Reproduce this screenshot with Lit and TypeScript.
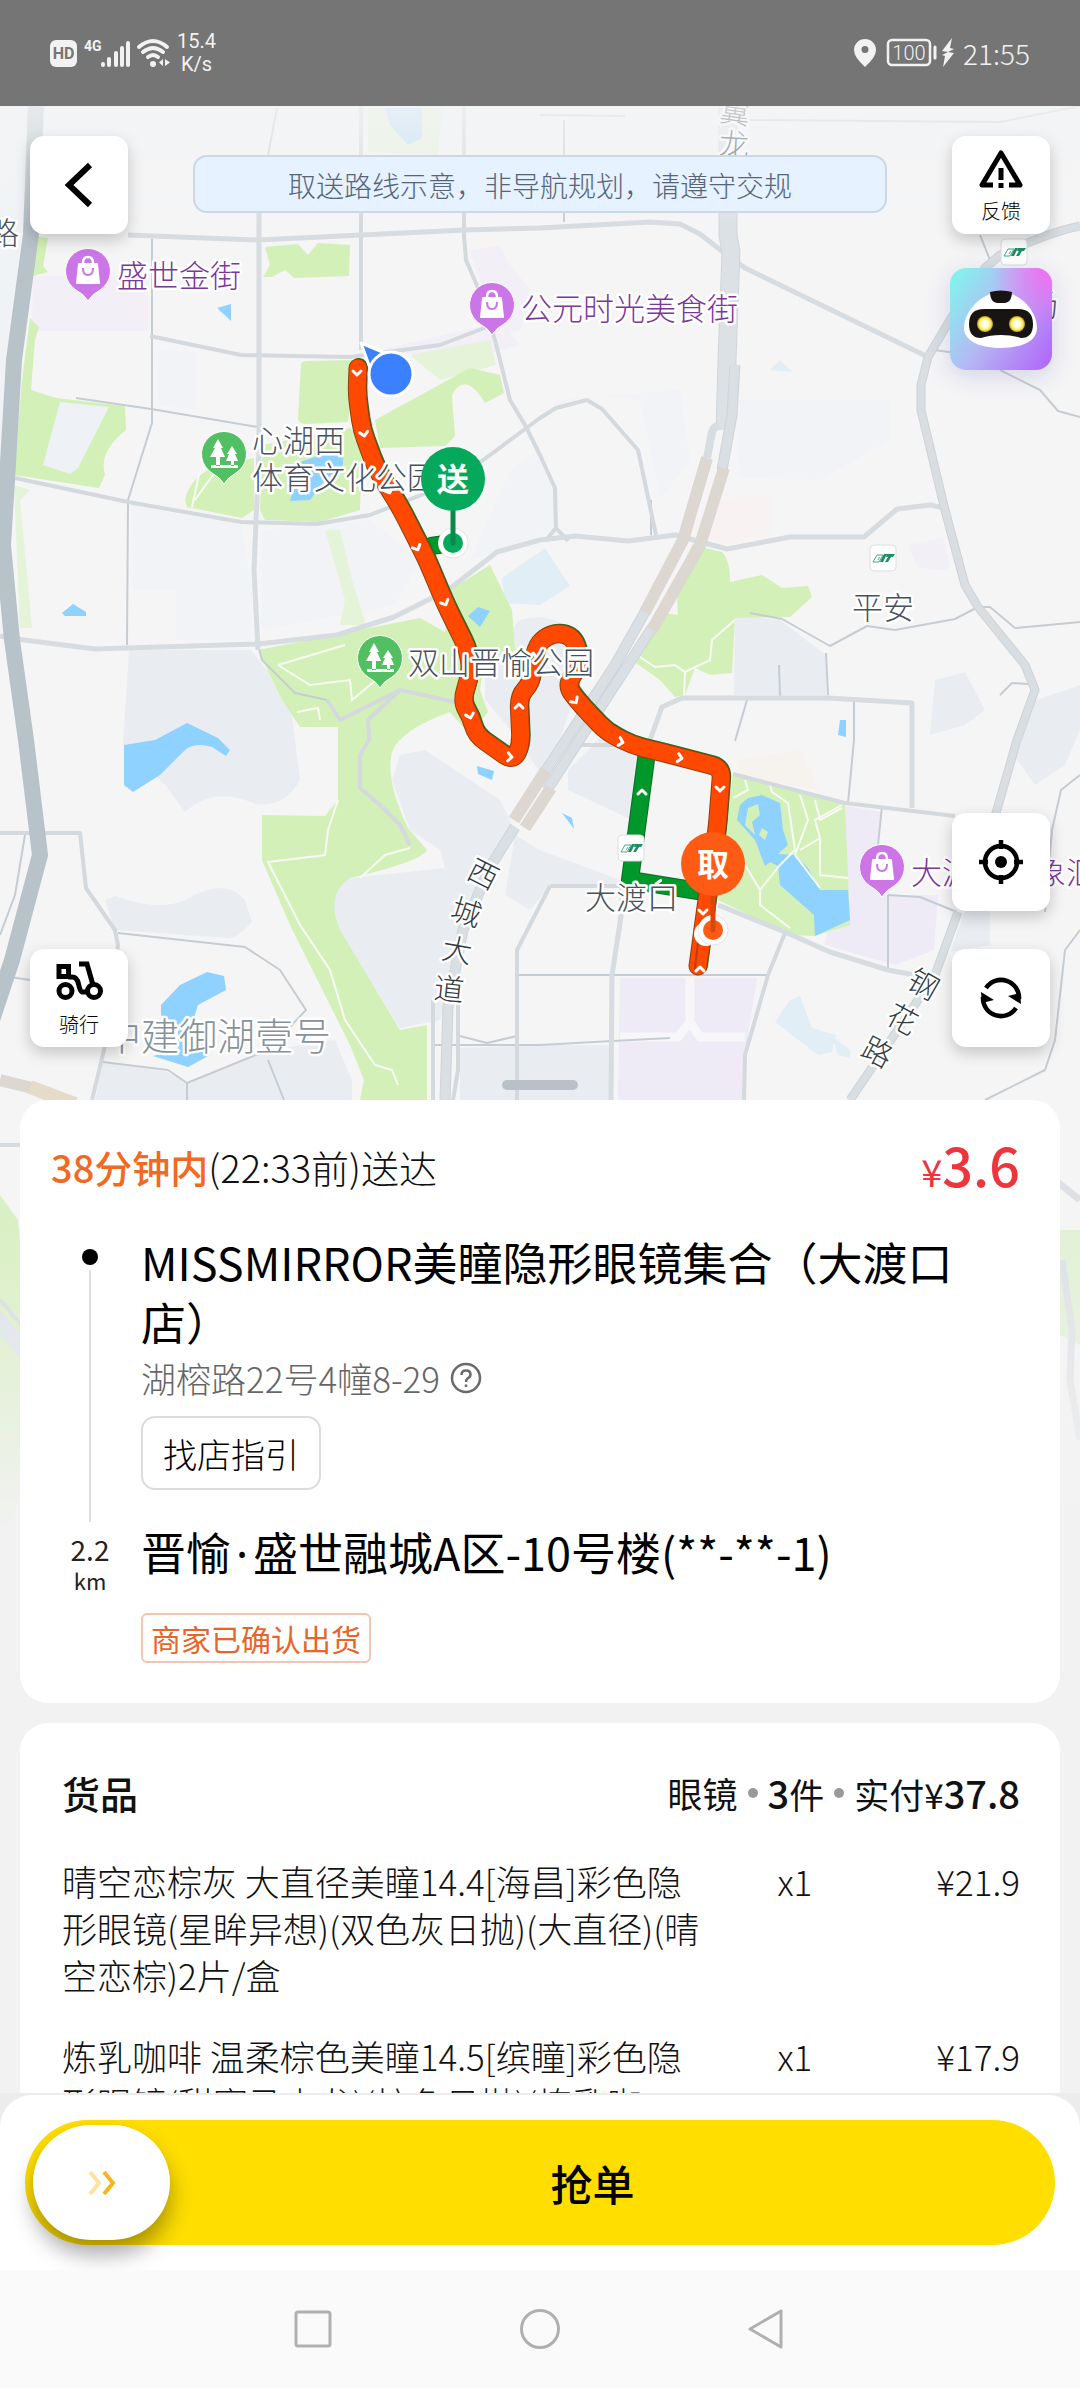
import { LitElement, html, svg, css } from "lit";
import { customElement, property } from "lit/decorators.js";

type Pt = [number, number];

interface Goods {
  name: string;
  count: string;
  price: string;
}

const GOODS: Goods[] = [
  {
    name: "晴空恋棕灰 大直径美瞳14.4[海昌]彩色隐形眼镜(星眸异想)(双色灰日抛)(大直径)(晴空恋棕)2片/盒",
    count: "x1",
    price: "¥21.9",
  },
  {
    name: "炼乳咖啡 温柔棕色美瞳14.5[缤瞳]彩色隐形眼镜(甜蜜马卡龙)(棕色日抛)(炼乳咖",
    count: "x1",
    price: "¥17.9",
  },
];

/* ---- map geometry, in map units ---- */

const BLOCKS = [
  "M129 650H251L290 700 300 780Q285 808 255 804 215 785 185 812L165 785 123 745z",
  "M105 900 115 896Q160 912 185 900 225 876 245 900L252 922Q235 940 228 938L115 930z",
  "M400 755 425 750 500 800 515 830 470 920 440 1020 400 1028 338 930Q325 890 350 878L445 868 440 850 410 830 392 780z",
  "M103 1062 168 1072 187 1083 268 1050 335 1040 352 1080V1100H95z",
  "M156 350 196 352V410L158 405z",
  "M132 505 241 525 252 590 252 640H176V590H133z",
  "M262 530 370 520 420 560 395 605 262 630z",
  "M510 470 540 450 555 490V530L470 560z",
  "M735 615 780 620 826 655V695H734z",
  "M735 400 890 400V440L820 480 740 478z",
  "M485 655 520 620Q560 608 592 650L545 780 515 735 485 700z",
  "M568 770 600 738 655 745 632 820 568 790z",
  "M515 835 540 850 620 880 620 886H550L530 910 505 895z",
  "M540 1045H612V1100H460V1048z",
  "M1010 750 1035 700 1080 685V730L1065 765 1035 785z",
  "M930 735 935 680 965 672 985 710 965 725z",
  "M965 910H990V945L950 952z",
  "M555 400 680 390 690 460 660 500 640 400 590 395 560 410z",
];

const PURPLES = [
  "M33 276H148V331H32z",
  "M470 250 500 246 508 262 530 290 520 330 500 335 480 280z",
  "M908 545 943 538 950 565 945 570 918 568z",
  "M380 350 500 322 520 345 470 360z",
];

const MALL_AREAS = [
  "M846 806 882 812 878 845 890 895H938L934 950 895 965 825 945z",
  "M620 978H757L748 1035 744 1100H618z",
];

const PALE_WATER = [
  "M502 578 545 548 570 586 540 605 505 603z",
  "M790 1000 800 996 812 1028 836 1035 832 1052 818 1055 775 1022z",
  "M832 1036 850 1050V1058L838 1055z",
  "M770 370 780 360 792 372z",
];

const TOP_WATER = "M385 108H422V138L408 145 390 125z";

const GREENS = [
  "M36 236 48 238 43 266 48 272 33 276z",
  "M30 318 39 327 35 340 31 390 56 398 125 406 126 430Q98 452 105 475L99 488 14 475 22 380z",
  "M265 247 298 244 308 255 318 243 350 245 349 276 294 278 285 270 272 277 263 277 270 265z",
  "M301 364Q302 361 308 361L356 360 348 422 305 424Q298 423 298 418z",
  "M375 420 470 368 500 375 504 393 485 403Q465 370 452 395L455 436 445 446 380 448z",
  "M262 445 350 428 362 440 360 510 320 522 265 520 260 510z",
  "M185 500Q190 475 220 465L254 458V510L242 518 187 507z",
  "M692 545 722 552Q730 560 730 582L762 575 782 588 808 586 812 597 790 617 735 618 732 673 710 675 695 668 685 695 675 697 660 680 636 663 655 612 678 615 676 580z",
  "M733 774 845 805 850 925 815 936 790 935 718 900 724 830z",
  "M258 650 420 618 445 632 450 590 490 565 512 610 515 652 485 655 480 690 488 712 470 735 450 712Q400 730 392 752 385 780 408 828L427 850Q420 862 350 878 325 895 340 930L400 1030 427 1025V1100H360L364 1080 350 1045 290 925 262 860V815L325 816 338 800V727H300L282 700z",
];

const PALE_GREENS = [
  "M325 530 340 530 352 580 366 625H340L345 600z",
  "M14 485 30 490 20 500 32 628H20z",
  "M368 108H442L438 155 368 152z",
  "M410 355 490 340 496 365 440 380z",
];

const LAKES = [
  "M124 745 155 740 187 723 218 738 230 750 226 756 212 747Q195 742 185 750L160 775 133 792 124 785z",
  "M207 972 224 976 226 990 198 1005 190 1030 210 1055 188 1067 153 1056 178 1050V1030L161 1015V1005L180 985z",
  "M292 465 320 455 343 448V465L325 480 310 500 290 501 296 480z",
  "M217 308 231 304V321z",
  "M62 613 73 604 86 612V616H65z",
  "M468 616 478 607 490 611 480 627z",
  "M477 766 494 771 492 780 478 774z",
  "M840 720H846V737L838 735z",
  "M562 813 572 818 574 829z",
  "M762 795 780 803 783 830 788 845 778 854 795 855 808 868 820 890H848L850 920 815 936 814 915 780 885 778 866 770 862 765 866 755 840 737 820 740 805 748 798z",
];

const THIN_ROADS = [
  "M152 239V423L128 500 127 645",
  "M76 398 151 409 258 427",
  "M978 607 990 607 1015 628 1080 622",
  "M978 607 955 619 895 630 867 626 830 646 782 619 750 613",
  "M826 653 828 695M747 700 735 741M779 665 780 696M854 701V740L848 803",
  "M882 806 878 845 888 870M888 895V968M888 895 920 897 957 912",
  "M515 975H770M540 1045 612 1041 670 1038",
  "M433 1045H540M460 1036 487 1043 517 1036",
  "M25 835 15 895 0 935M118 933 245 947 280 970 306 1010 268 1050 187 1083 168 1070 103 1062",
  "M187 1083V1100M268 1060 284 1100M10 977 30 980",
  "M1080 775 1061 790 1052 830 1045 912M1080 930 1065 950 1055 1040 1045 1070 985 1100",
  "M564 120V222M277 108 268 155M980 235 990 260M1000 370 1040 390 1058 411 1080 417M935 350 955 353",
  "M1000 695 1012 683 1028 684M651 535V500",
  "M540 115 625 116M750 120 1000 122 1080 106",
  "M258 645 262 660 295 693 327 700",
];

const MID_ROADS = [
  "M150 336 241 355 350 357 440 345 500 322",
  "M15 478 128 502 241 522 317 524 370 515 452 483 540 418 556 408 587 400 602 409 638 450 656 535",
  "M361 106V350M464 106V235L466 260 478 288 495 340 510 400 525 425 540 455 555 488 556 530M545 541 556 528 568 541",
  "M785 933 768 975 745 1055 744 1100",
  "M550 886H620M550 886 517 950V1100",
  "M0 833H80L86 888 115 930 118 945 104 1050 92 1100",
  "M327 700 340 720 400 690 455 702M400 690 368 720 369 740 360 755V788L380 805 400 825 410 845",
  "M733 774 845 803 955 816",
  "M433 1000V1100M458 1000V1070L453 1100M570 760 580 745 650 745",
];

const MAIN_ROADS = [
  "M128 235 258 240 465 230 540 228 650 222 680 224 700 234 723 252 745 268 928 357",
  "M259 211V450L254 570 258 650",
  "M0 636 24 640 95 649 258 644 337 635 394 617 448 590 497 552 540 540 575 536 628 541 675 535 727 549 790 537H864L897 509 930 505 944 508",
  "M650 740 662 707 682 698H828L912 703V808",
  "M718 905 785 932 830 952 888 970 915 975",
  "M622 886V910L612 975 611 1100",
];

const EAST_ROAD =
  "M1080 226Q1050 232 1000 255L985 268 950 320 928 357 921 385V410L945 510 965 585 978 607 1025 665 1035 690 1017 740 994 820M958 912 935 975 850 1100";

const RIVER_ROAD = "M36 106 31 234 14 360 7 480 3 545 12 640 26 740 40 855 12 960-8 1020";

const TRUNK = "M728 106V235L731 252 727 360 725 430";

const TRUNK_LEGS =
  "M735 365 732 415 722 470M646 610 615 665 543 775M652 628 547 790M515 827 490 867 463 930 448 1007 445 1100";

const TUNNELS =
  "M707 458 683 540 645 612M724 468 700 545 652 630M546 770 514 820M551 788 525 828M0 1080 32 1088";

const FOOTPATHS =
  "M745 780 748 790 733 798M770 785 772 792 788 803 795 850 780 865 760 890V905L790 928M800 795 808 820 795 855M815 800 820 820 842 808M800 850 820 838 815 820 842 805M820 838V875L848 878M795 855 820 888M760 890 745 865 725 850M637 655 655 667 675 665 685 672 710 660 712 640 735 620M685 672 684 697M338 800 328 830 325 855 268 862 300 925 330 970 345 1020 375 1065 392 1070 398 1085M410 848 385 855 360 878M278 665 345 645M278 665 310 685 350 680 352 700 400 660M200 470 192 507M220 465 195 500M297 712 318 708 320 720";

/* the waypoints of the ride that is under way */
const RIDE: Pt[] = [
  [358, 368], [357, 395], [362, 430], [376, 468], [400, 507], [427, 560],
  [445, 603], [468, 650], [471, 670], [462, 702], [471, 717], [476, 735],
  [513, 761], [521, 745], [519, 696], [531, 683], [533, 663], [537, 645],
  [547, 636], [559, 633], [570, 636], [577, 645], [580, 664], [566, 686],
  [583, 707], [607, 732], [632, 745], [672, 755], [722, 768], [717, 830],
  [707, 900], [698, 966],
];
const DELIVERY_LEG = "M647 752 630 880 698 891M431 546 452 543";

/** Joins the points with lines and rounds every bend by up to r units. */
function rounded(points: Pt[], r: number): string {
  let d = `M${points[0].join(" ")}`;
  for (let i = 1; i < points.length - 1; i++) {
    const [x, y] = points[i];
    const toward = (p: Pt): string => {
      const len = Math.hypot(p[0] - x, p[1] - y);
      const k = Math.min(r, len / 2) / len;
      return `${(x + (p[0] - x) * k).toFixed(1)} ${(y + (p[1] - y) * k).toFixed(1)}`;
    };
    d += `L${toward(points[i - 1])}Q${x} ${y} ${toward(points[i + 1])}`;
  }
  return d + `L${points[points.length - 1].join(" ")}`;
}

/* x, y, heading in degrees (0 = up) */
const CHEVRONS: [number, number, number][] = [
  [357, 373, 180], [364, 434, 170], [389, 491, 155], [417, 548, 155],
  [445, 603, 155], [470, 716, 165], [510, 757, 95], [519, 706, 0],
  [533, 655, 10], [575, 701, 145], [621, 742, 105], [680, 758, 100],
  [720, 789, 180], [703, 912, 180], [700, 969, 0], [642, 792, 0],
  [658, 884, 280],
];

interface Label {
  x: number;
  y: number;
  text: string;
  kind: string;
}
const LABELS: Label[] = [
  { x: 117, y: 287, text: "盛世金街", kind: "mall" },
  { x: 521, y: 320, text: "公元时光美食街", kind: "mall" },
  { x: 911, y: 884, text: "大渡口万象汇", kind: "mall" },
  { x: 252, y: 452, text: "心湖西", kind: "place" },
  { x: 252, y: 489, text: "体育文化公园", kind: "place" },
  { x: 408, y: 674, text: "双山晋愉公园", kind: "place" },
  { x: 852, y: 619, text: "平安", kind: "place" },
  { x: 585, y: 909, text: "大渡口", kind: "place" },
  { x: -12, y: 244, text: "路", kind: "place" },
  { x: 1027, y: 316, text: "场", kind: "place" },
  { x: 103, y: 1050, text: "中建御湖壹号", kind: "estate" },
];

/* x, y, rotation, character, kind */
const ROAD_NAMES: [number, number, number, string, string][] = [
  [483, 875, 27, "西", "road"], [466, 913, 18, "城", "road"],
  [457, 951, 10, "大", "road"], [449, 990, 6, "道", "road"],
  [923, 985, 30, "钢", "road"], [902, 1020, 28, "花", "road"],
  [877, 1053, 28, "路", "road"], [735, 113, 8, "翼", "road"],
  [734, 145, 3, "龙", "road"],
];

const join = (list: string[]) => list.join("");

@customElement("delivery-map")
export class DeliveryMap extends LitElement {
  static styles = css`
    :host { display: block; }
    svg { display: block; width: 100%; height: auto; }
    text { font-family: "Noto Sans CJK SC", "Noto Sans", sans-serif; font-weight: 300; }
    .label { paint-order: stroke; stroke: #fff; stroke-width: 5px; stroke-linejoin: round; font-size: 31px; }
    .mall { fill: #7b3899; }
    .place { fill: #465260; }
    .estate { fill: #87929c; font-size: 38px; }
    .road { fill: #333c45; font-size: 30px; text-anchor: middle; }
    .stop { fill: #fff; font-size: 32px; font-weight: 700; text-anchor: middle; }
    .road-line { fill: none; stroke-linejoin: round; }
  `;

  private poi(x: number, y: number, kind: "mall" | "park") {
    const fill = kind === "mall" ? "#cb75e6" : "#53bf63";
    return svg`<g transform="translate(${x} ${y})">
      <path d="M0 30Q-3 24-12 19A22.500 22.500 0 1 1 12 19Q3 24 0 30z" fill=${fill} stroke="#fff" stroke-width="1"/>
      ${kind === "mall"
        ? svg`<path d="M-9-7H9L11 12H-11z" fill="#fff" stroke="#fff" stroke-width="2" stroke-linejoin="round"/>
            <path d="M-5-8Q-5-14 0-14T5-8" fill="none" stroke="#fff" stroke-width="2.500"/>
            <path d="M-5-3Q-5 4 0 4T5-3" fill="none" stroke=${fill} stroke-width="2"/>`
        : svg`<path d="M-6-15-11-6H-9L-14 3H-8V12H-4V3H1L-3-6H-1zM8-8 3 0H5L2 7H7V12H10V7H14L11 0H13zM-13 11H14V14H-13z" fill="#fff"/>`}
    </g>`;
  }

  private station(x: number, y: number) {
    return svg`<g transform="translate(${x} ${y})">
      <rect x="-13" y="-13" width="26" height="26" rx="4" fill="#fff" stroke="#d9dfe2" stroke-width="1"/>
      <path d="M-6-3H0L-4 4H-10z" fill="none" stroke="#3fae80" stroke-width="1"/>
      <path d="M-5 2-3-1M-2 3 1-2" stroke="#3fae80" stroke-width="1"/>
      <path d="M1-4H4L0 4H-3zM4-4H12L10-1H8L5 4H2L5-1H3z" fill="#1d8f62"/>
    </g>`;
  }

  private stop(x: number, y: number, fill: string, dark: string, base: number, name: string) {
    return svg`<g>
      <circle cx=${x} cy=${base} r="15" fill="#fff" stroke="#00000018" stroke-width="1"/>
      <circle cx=${x} cy=${base} r="10" fill=${fill}/>
      <path d="M${x} ${y + 20}V${base}" stroke=${dark} stroke-width="5" stroke-linecap="round"/>
      <circle cx=${x} cy=${y} r="32" fill=${fill}/>
      <text class="stop" x=${x} y=${y + 12}>${name}</text>
    </g>`;
  }

  render() {
    const ride = rounded(RIDE, 11);
    return html`<svg viewBox="0 106 1080 1464" role="img" aria-label="配送路线地图">
      <defs>
        <linearGradient id="sky" x1="0" y1="0" x2="0" y2="1">
          <stop offset="0" stop-color="#f3f4f5" stop-opacity=".8"/>
          <stop offset=".4" stop-color="#f3f4f5" stop-opacity=".55"/>
          <stop offset="1" stop-color="#f4f5f6" stop-opacity="0"/>
        </linearGradient>
        <linearGradient id="ground" x1="0" y1="0" x2="0" y2="1">
          <stop offset="0" stop-color="#f2f2f2" stop-opacity="0"/>
          <stop offset=".9" stop-color="#f2f2f2"/>
        </linearGradient>
      </defs>
      <rect y="106" width="1080" height="1464" fill="#f5f5f6"/>
      <path d="M0 106H30L10 400 0 560z" fill="#f0f3f6"/>
      <path d=${join(BLOCKS.slice(4, 8)) + BLOCKS[9] + BLOCKS[17]} fill="#f1f3f6"/>
      <path d=${join([...BLOCKS.slice(0, 4), BLOCKS[8], ...BLOCKS.slice(10, 17)])} fill="#e9edf2"/>
      <path d="M720 500 770 495V535L730 545 690 530z" fill="#f8f2f2"/>
      <path d="M738 760 800 750 820 790 736 775z" fill="#f6f2ee"/>
      <path d=${join(PURPLES)} fill="#f2eff7"/>
      <path d=${join(MALL_AREAS)} fill="#eeeaf6"/>
      <path d="M690 978V1022L700 1037H745M690 1022 678 1037H620" fill="none" stroke="#f7f6f8" stroke-width="9"/>
      <path d=${join(PALE_WATER)} fill="#e2eef5"/>
      <path d=${join(PALE_GREENS)} fill="#e5f3d9"/>
      <path d=${TOP_WATER} fill="#b8dcf8"/>
      <path d=${join(GREENS)} fill="#d3f0b8"/>
      <path d="M60 402 109 407 78 468 70 474 43 465z" fill="#eef1f5"/>
      <path d=${join(LAKES)} fill="#8fd1ff"/>
      <path d="M748 808 758 804 760 815 752 822 755 835 745 825zM762 828 768 832 765 840 759 835z" fill="#d3f0b8"/>
      <path d=${FOOTPATHS} fill="none" stroke="#f7fbf4" stroke-width="2"/>
      <path class="road-line" d=${join(THIN_ROADS)} stroke="#c6cdd2" stroke-width="2"/>
      <path class="road-line" d=${join(MID_ROADS)} stroke="#d3d9dc" stroke-width="4"/>
      <path class="road-line" d=${join(MAIN_ROADS)} stroke="#d6dce0" stroke-width="5"/>
      <path class="road-line" d=${EAST_ROAD} stroke="#ccd4d8" stroke-width="9"/>
      <path class="road-line" d=${EAST_ROAD} stroke="#d8dee1" stroke-width="7"/>
      <path class="road-line" d=${RIVER_ROAD} stroke="#b7c3c9" stroke-width="16"/>
      <path class="road-line" d=${TRUNK} stroke="#cfd6da" stroke-width="19"/>
      <path class="road-line" d=${TRUNK} stroke="#dce1e5" stroke-width="17"/>
      <path class="road-line" d=${TRUNK_LEGS} stroke="#cdd4da" stroke-width="11"/>
      <path class="road-line" d=${TRUNK_LEGS} stroke="#dadfe4" stroke-width="9"/>
      <path class="road-line" d="M707 458 712 432Q714 426 719 426" stroke="#d8dde1" stroke-width="8"/>
      <path class="road-line" d=${TUNNELS} stroke="#dcd7d0" stroke-width="12"/>
      <path class="road-line" d="M30 1087 75 1104" stroke="#e4dbc9" stroke-width="14"/>
      <path d="M0 1195 18 1220 30 1360 30 1480 0 1540z" fill="#daf0c4"/>
      <path class="road-line" d="M0 1300 30 1335M0 1145H30" stroke="#d5dbde" stroke-width="4"/>
      <path d="M0 1310 30 1345V1370L0 1335z" fill="#dde2e8"/>
      <path d="M1050 1230H1080V1345L1050 1330z" fill="#e2f1d6"/>
      <path class="road-line" d="M1055 1180 1080 1200M1062 1260 1072 1330 1070 1380 1080 1440" stroke="#dde1e5" stroke-width="7"/>
      <rect y="1230" width="1080" height="340" fill="url(#ground)"/>
      <g fill="none" stroke-linecap="round" stroke-linejoin="round">
        <path d=${DELIVERY_LEG} stroke="#0a6b22" stroke-width="18"/>
        <path d=${DELIVERY_LEG} stroke="#00972b" stroke-width="16"/>
        <path d=${ride} stroke="#0c7a2a" stroke-width="18" transform="translate(1 -1)"/>
        <path d=${ride} stroke="#91400a" stroke-width="19"/>
        <path d=${ride} stroke="#ff4800" stroke-width="17"/>
        <path d="M695 968 700 925" stroke="#b8400c" stroke-width="2"/>
        ${CHEVRONS.map(
          ([x, y, a]) => svg`<path d="M-4 2 0-2 4 2" stroke="#fff" stroke-width="3" transform="translate(${x} ${y}) rotate(${a})"/>`,
        )}
      </g>
      ${LABELS.map((l) => svg`<text class="label ${l.kind}" x=${l.x} y=${l.y}>${l.text}</text>`)}
      ${ROAD_NAMES.map(
        ([x, y, a, t, k]) => svg`<text class="label ${k}" y="10" transform="translate(${x} ${y}) rotate(${a})">${t}</text>`,
      )}
      ${this.poi(88, 271, "mall")} ${this.poi(492, 305, "mall")} ${this.poi(882, 867, "mall")}
      ${this.poi(224, 454, "park")} ${this.poi(380, 658, "park")}
      ${this.station(1014, 252)} ${this.station(883, 558)} ${this.station(631, 848)}
      <g fill="#3a80ff" stroke="#fff" stroke-width="3" stroke-linejoin="round">
        <path d="M361 343 385 353 370 368z"/>
        <circle cx="391" cy="374" r="22"/>
      </g>
      <circle cx="706" cy="934" r="12" fill="#fff"/>
      ${this.stop(713, 864, "#ff5b14", "#d9480a", 930, "取")}
      ${this.stop(453, 479, "#06a95b", "#078a4b", 543, "送")}
      <rect y="106" width="1080" height="120" fill="url(#sky)"/>
    </svg>`;
  }
}

@customElement("goods-card")
export class GoodsCard extends LitElement {
  @property({ attribute: false }) goods: Goods[] = [];

  static styles = css`
    :host { display: block; background: #fff; border-radius: 28px; padding: 40px 40px 40px 42px; color: #111; }
    .head { display: flex; justify-content: space-between; align-items: center; height: 60px; }
    h2 { margin: 0; font-size: 38px; font-weight: 500; line-height: 60px; }
    .sum { display: flex; align-items: center; gap: 10px; font-size: 35px; line-height: 48px; font-weight: 400; }
    .num { font-size: 38px; font-weight: 500; }
    .dot { width: 10px; height: 10px; border-radius: 50%; background: #999; }
    table { width: 100%; border-collapse: collapse; table-layout: fixed; font-size: 35px; line-height: 47px; font-weight: 300; }
    td { padding: 34px 0 0; vertical-align: top; text-align: left; }
    .name { width: 68%; }
    .count { width: 17%; text-align: center; }
    .price { text-align: right; }
  `;

  render() {
    return html`
      <div class="head">
        <h2>货品</h2>
        <div class="sum">
          <span>眼镜</span><i class="dot"></i>
          <span><b class="num">3</b>件</span><i class="dot"></i>
          <span>实付¥<b class="num">37.8</b></span>
        </div>
      </div>
      <table aria-label="货品">
        <tbody>
          ${this.goods.map(
            (g) => html`<tr>
              <td class="name">${g.name}</td>
              <td class="count">${g.count}</td>
              <td class="price">${g.price}</td>
            </tr>`,
          )}
        </tbody>
      </table>
    `;
  }
}

@customElement("status-bar")
export class StatusBar extends LitElement {
  static styles = css`
    :host {
      display: flex; justify-content: space-between; align-items: center;
      height: 106px; padding: 0 50px; box-sizing: border-box;
      background: #757575; color: #f2f2f2; font-family: Roboto, sans-serif;
    }
    .side { display: flex; align-items: center; gap: 8px; }
    .signal { gap: 6px; }
    .speed { font-size: 20px; line-height: 23px; text-align: center; }
    .time { font-size: 28px; font-weight: 300; line-height: 34px; font-family: "Noto Sans CJK SC", sans-serif; }
    svg { display: block; overflow: visible; }
    text { font-family: Roboto, sans-serif; fill: #f2f2f2; }
    .hd { fill: #757575; font-size: 16px; font-weight: 700; text-anchor: middle; }
    .gen { font-size: 14px; font-weight: 700; }
    .level { font-size: 20px; text-anchor: middle; font-weight: 300; }
  `;

  render() {
    return html`
      <div class="side signal">
        <svg width="27" height="28" viewBox="0 0 27 28">
          <rect width="27" height="27" y="1" rx="6" fill="#f2f2f2"/><text class="hd" x="13.500" y="20">HD</text>
        </svg>
        <svg width="48" height="30" viewBox="0 0 48 30">
          <text class="gen" x="1" y="13">4G</text>
          <path d="M20 27V26M26 27V21M33 27V15M39 27V10M45 27V5" stroke="#f2f2f2" stroke-width="4" stroke-linecap="round"/>
        </svg>
        <svg width="34" height="30" viewBox="0 0 34 30">
          <g fill="none" stroke="#f2f2f2" stroke-width="4" stroke-linecap="round">
            <path d="M2 9Q16-3 30 9M6 14Q16 6 26 14M11 19Q16 15 21 19"/>
          </g>
          <circle cx="16" cy="26" r="3" fill="#f2f2f2"/>
          <path d="M26 21V28L22 24.500zM28 21V28L33 24.500z" fill="#f2f2f2"/>
        </svg>
        <div class="speed">15.4<br />K/s</div>
      </div>
      <div class="side">
        <svg width="24" height="30" viewBox="0 0 24 30">
          <path d="M12 1A11 11 0 0 1 23 12Q23 19 12 29Q1 19 1 12A11 11 0 0 1 12 1zM12 8A3.500 3.500 0 1 0 12 15 3.500 3.500 0 0 0 12 8z" fill="#f2f2f2"/>
        </svg>
        <svg width="70" height="30" viewBox="0 0 70 30">
          <rect x="3" y="2" width="42" height="25" rx="4" fill="none" stroke="#f2f2f2" stroke-width="2.500"/>
          <text class="level" x="24" y="22">100</text>
          <path d="M50 9V20" stroke="#f2f2f2" stroke-width="3" stroke-linecap="round"/>
          <path d="M67 0 57 13 63 14 57 17 60 18 58 29 69 15 63 14 69 11 65 10z" fill="#f2f2f2"/>
        </svg>
        <span class="time">21:55</span>
      </div>
    `;
  }
}

@customElement("app-root")
export class AppRoot extends LitElement {
  static styles = css`
    :host {
      display: flex; flex-direction: column; height: 100vh; background: #f2f2f2; color: #111;
      font-family: "Noto Sans CJK SC", "Noto Sans", sans-serif;
    }
    * { box-sizing: border-box; }
    button { font: inherit; color: inherit; border: 0; padding: 0; margin: 0; background: none; }
    svg { display: block; }
    status-bar { flex: none; }

    .stage { position: relative; flex: 1; min-height: 0; overflow-y: auto; scrollbar-width: none; }
    .backdrop { position: absolute; top: 0; left: 0; right: 0; }
    .window {
      position: relative; aspect-ratio: 1080 / 994; padding: 30px 30px 53px;
      display: flex; flex-direction: column; justify-content: space-between;
    }
    .row { display: flex; justify-content: space-between; }
    .top { align-items: flex-start; gap: 65px; }
    .bottom { align-items: flex-end; }
    .stack { display: flex; flex-direction: column; align-items: center; gap: 34px; }
    .bottom .stack { gap: 38px; }
    .tool {
      width: 98px; height: 98px; border-radius: 14px; background: #fff; flex: none;
      display: flex; flex-direction: column; align-items: center; justify-content: center; gap: 10px;
      font-size: 20px; line-height: 24px; font-weight: 300; color: #000;
      box-shadow: 0 6px 16px rgba(0, 0, 0, .2);
    }
    .robot { width: 102px; height: 102px; margin: 0 -2px; border-radius: 16px; flex: none; box-shadow: 0 6px 24px rgba(60, 60, 160, .18); }
    .notice {
      flex: 1; margin: 19px 0 0; padding: 2px 16px 0; border: 2px solid #c9d9e6; border-radius: 14px;
      background: #e6f2ff; color: #56657a; font-size: 28px; line-height: 52px; font-weight: 300; text-align: center;
    }
    .handle { position: absolute; left: 50%; bottom: 10px; width: 76px; height: 10px; margin-left: -38px; border-radius: 5px; background: #b9c0c7; }

    .cards { position: relative; display: flex; flex-direction: column; gap: 20px; padding: 0 20px; }
    .order { background: #fff; border-radius: 28px; padding: 32px 40px 40px 31px; }
    .eta { display: flex; justify-content: space-between; align-items: center; height: 70px; line-height: 56px; font-size: 38px; font-weight: 300; margin: 0 0 30px; }
    .within { color: #f26a22; font-weight: 500; }
    .fee { color: #f0343c; font-weight: 500; font-size: 54px; }
    .yen { font-size: 38px; font-weight: 400; }
    .leg { display: grid; grid-template-columns: 78px 1fr; column-gap: 12px; }
    .rail { display: flex; flex-direction: column; align-items: center; }
    .pickup .rail { padding-top: 17px; gap: 5px; }
    .point { width: 16px; height: 16px; border-radius: 50%; background: #000; }
    .line { flex: 1; width: 2px; background: #dedede; }
    .dropoff .rail { padding-top: 10px; font-size: 28px; line-height: 34px; color: #222; }
    .unit { font-size: 22px; line-height: 28px; }
    .info { display: flex; flex-direction: column; align-items: flex-start; }
    .pickup .info { padding-bottom: 32px; }
    h1 { margin: 0; font-size: 45px; line-height: 60px; font-weight: 400; color: #000; }
    .mid { font-family: "Noto Sans", sans-serif; padding: 0 5px; }
    .addr { display: flex; align-items: center; gap: 10px; margin: 0 0 12px; font-size: 35px; line-height: 52px; font-weight: 300; color: #666; }
    .guide { height: 74px; padding: 0 20px; border: 2px solid #dcdcdc; border-radius: 14px; font-size: 34px; font-weight: 300; color: #000; }
    .tag { margin-top: 29px; padding: 0 8px; border: 2px solid #f4c6ad; border-radius: 6px; color: #e8642a; font-size: 30px; line-height: 46px; font-weight: 400; }

    .foot { flex: none; padding-top: 2px; background: #ececec; }
    .bar { padding: 25px; background: #fff; border-radius: 32px 32px 0 0; overflow: hidden; }
    .grab { width: 100%; padding: 5px 8px; display: flex; align-items: center; border-radius: 63px; background: #ffde00; color: #000; font-size: 42px; font-weight: 500; }
    .knob { width: 137px; height: 115px; border-radius: 58px; background: #fff; display: flex; align-items: center; justify-content: center; box-shadow: 0 14px 22px rgba(0, 0, 0, .35); }
    .grab-text { flex: 1; padding-right: 32px; }
    .nav { flex: none; display: flex; justify-content: center; align-items: center; gap: 167px; height: 118px; background: #fafafa; }
    .key { width: 60px; height: 60px; display: flex; align-items: center; justify-content: center; }
  `;

  private robot() {
    return html`<button class="robot" aria-label="智能助手">
      <svg width="102" height="102" viewBox="0 0 102 102">
        <defs>
          <linearGradient id="face" x1="0" y1="0.200" x2="1" y2="0.800">
            <stop offset="0" stop-color="#86efee"/><stop offset=".45" stop-color="#b5b8f4"/><stop offset="1" stop-color="#b26df8"/>
          </linearGradient>
          <radialGradient id="pink" cx="1" cy="0" r=".6">
            <stop offset="0" stop-color="#f56df2"/><stop offset="1" stop-color="#f56df2" stop-opacity="0"/>
          </radialGradient>
          <radialGradient id="eye"><stop offset=".4" stop-color="#fffdf0"/><stop offset=".75" stop-color="#ffe94a"/><stop offset="1" stop-color="#b89a10"/></radialGradient>
        </defs>
        <rect width="102" height="102" rx="16" fill="url(#face)"/>
        <rect width="102" height="102" rx="16" fill="url(#pink)"/>
        <path d="M51 24C33 24 14 42 14 60 14 74 32 80 51 80S87 74 87 60C87 42 69 24 51 24z" fill="#fff"/>
        <path d="M34 41H68Q83 41 83 56 83 70 71 70 62 67 51 67T31 70Q19 70 19 56 19 41 34 41z" fill="#171412"/>
        <path d="M40 24Q51 21 62 24 62 34 55 35H47Q40 34 40 24z" fill="#171412"/>
        <circle cx="35" cy="56" r="8" fill="url(#eye)"/><circle cx="67" cy="56" r="8" fill="url(#eye)"/>
      </svg>
    </button>`;
  }

  render() {
    return html`
      <status-bar></status-bar>
      <main class="stage">
        <delivery-map class="backdrop"></delivery-map>
        <section class="window">
          <div class="row top">
            <button class="tool" aria-label="返回">
              <svg width="40" height="50" viewBox="0 0 40 50"><path d="M31 5 10 25 31 45" fill="none" stroke="#000" stroke-width="6"/></svg>
            </button>
            <p class="notice">取送路线示意，非导航规划，请遵守交规</p>
            <div class="stack">
              <button class="tool">
                <svg width="46" height="42" viewBox="0 0 46 42">
                  <path d="M15 38H4L23 6 42 38H31" fill="none" stroke="#000" stroke-width="5" stroke-linejoin="round"/>
                  <path d="M23 21V33M23 36V41" stroke="#000" stroke-width="5"/>
                </svg>
                反馈
              </button>
              ${this.robot()}
            </div>
          </div>
          <div class="row bottom">
            <button class="tool">
              <svg width="50" height="42" viewBox="0 0 50 42">
                <g fill="none" stroke="#000" stroke-width="5">
                  <rect x="5" y="6.500" width="9.500" height="10"/>
                  <path d="M14 17H18Q23 17 24.500 24T28 32H34"/>
                  <circle cx="11.500" cy="31" r="6.500"/><circle cx="40" cy="31" r="6.500"/>
                  <path d="M25 4H33L39 25"/>
                </g>
              </svg>
              骑行
            </button>
            <div class="stack">
              <button class="tool" aria-label="定位">
                <svg width="46" height="46" viewBox="0 0 46 46">
                  <circle cx="23" cy="23" r="16" fill="none" stroke="#000" stroke-width="4.500"/>
                  <circle cx="23" cy="23" r="6" fill="#000"/>
                  <path d="M23 1V10M23 36V45M1 23H10M36 23H45" stroke="#000" stroke-width="4.500"/>
                </svg>
              </button>
              <button class="tool" aria-label="刷新">
                <svg width="42" height="42" viewBox="0 0 42 42">
                  <path d="M6 11A18 18 0 0 1 39 22M36 31A18 18 0 0 1 3 20" fill="none" stroke="#000" stroke-width="4.500"/>
                  <path d="M41 27 28 19 40 16zM1 15 14 23 2 26z" fill="#000"/>
                </svg>
              </button>
            </div>
          </div>
          <div class="handle"></div>
        </section>

        <div class="cards">
          <section class="order">
            <p class="eta">
              <span><b class="within">38分钟内</b>(22:33前)送达</span>
              <span class="fee"><span class="yen">¥</span>3.6</span>
            </p>
            <div class="leg pickup">
              <div class="rail"><i class="point"></i><i class="line"></i></div>
              <div class="info">
                <h1>MISSMIRROR美瞳隐形眼镜集合（大渡口店）</h1>
                <p class="addr">
                  湖榕路22号4幢8-29
                  <svg width="32" height="32" viewBox="0 0 32 32" fill="none" stroke="#6a6a6a" stroke-width="2.500">
                    <circle cx="16" cy="16" r="14"/>
                    <path d="M11.500 13Q11.500 8.500 16 8.500T20.500 12.500Q20.500 15 17.500 16.500 16 17.500 16 20M16 22.500V25"/>
                  </svg>
                </p>
                <button class="guide">找店指引</button>
              </div>
            </div>
            <div class="leg dropoff">
              <div class="rail"><span>2.2</span><span class="unit">km</span></div>
              <div class="info">
                <h1>晋愉<span class="mid">·</span>盛世融城A区-10号楼(**-**-1)</h1>
                <span class="tag">商家已确认出货</span>
              </div>
            </div>
          </section>
          <goods-card .goods=${GOODS}></goods-card>
        </div>
      </main>
      <div class="foot">
        <div class="bar">
          <button class="grab">
            <span class="knob">
              <svg width="32" height="26" viewBox="0 0 32 26" fill="none" stroke-width="4">
                <path d="M4 2 13 13 4 24" stroke="#fbe3a0"/><path d="M18 2 27 13 18 24" stroke="#f5b51f"/>
              </svg>
            </span>
            <span class="grab-text">抢单</span>
          </button>
        </div>
      </div>
      <nav class="nav" aria-label="系统导航">
        <button class="key" aria-label="最近任务"><svg width="40" height="40" viewBox="0 0 40 40"><rect x="3" y="3" width="34" height="34" rx="2" fill="none" stroke="#b0b0b0" stroke-width="3"/></svg></button>
        <button class="key" aria-label="主页"><svg width="42" height="42" viewBox="0 0 42 42"><circle cx="21" cy="21" r="18.500" fill="none" stroke="#b0b0b0" stroke-width="3"/></svg></button>
        <button class="key" aria-label="后退"><svg width="42" height="42" viewBox="0 0 42 42"><path d="M35 3V39L4 21z" fill="none" stroke="#b0b0b0" stroke-width="3" stroke-linejoin="round"/></svg></button>
      </nav>
    `;
  }
}
